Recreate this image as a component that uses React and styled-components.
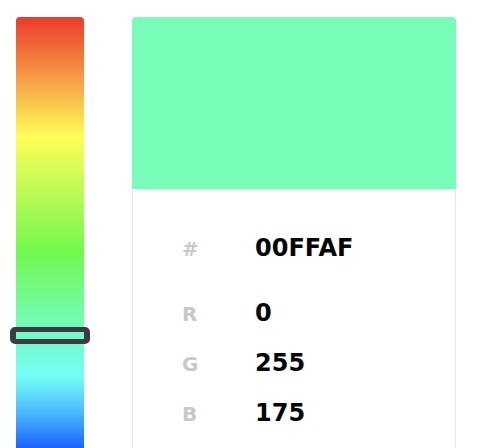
import React from "react";
import styled, { createGlobalStyle } from "styled-components";

const Global = createGlobalStyle`
  html, body { margin: 0; padding: 0; background: #ffffff; overflow: hidden; }
  body { font-family: "DejaVu Sans", "Liberation Sans", sans-serif; }
`;

const Page = styled.div`
  display: flex;
  align-items: flex-start;
  gap: 48px;
  padding: 17px 0 0 16px;
  height: 448px;
  box-sizing: border-box;
  overflow: hidden;
`;

const Slider = styled.div`
  position: relative;
  flex: 0 0 68px;
  height: 720px;
  border-radius: 4px;
  background: linear-gradient(
    to bottom,
    #ec3a2a 0px,
    #f59a47 60px,
    #fefe57 120px,
    #b9fa55 178px,
    #72f84e 235px,
    #74fbae 300px,
    #74fef6 360px,
    #4ab8fb 396px,
    #1c62ff 431px,
    #1a40ff 480px
  );
`;

const Handle = styled.div`
  position: absolute;
  left: -6px;
  top: ${(p) => p.$top}px;
  width: 80px;
  height: 17px;
  box-sizing: border-box;
  border-style: solid;
  border-color: #3d3a46;
  border-width: 5px 6px;
  border-radius: 5px;
  background: transparent;
`;

const Card = styled.div`
  flex: 0 0 324px;
  display: flex;
  flex-direction: column;
  border-radius: 4px 4px 0 0;
  overflow: hidden;
  height: 460px;
`;

const Swatch = styled.div`
  height: 172px;
  background: ${(p) => p.$color};
`;

const Body = styled.div`
  flex: 1;
  background: #ffffff;
  border: 1px solid #e6e6e6;
  border-top: none;
  padding: 34px 0 0 49px;
  display: flex;
  flex-direction: column;
`;

const Row = styled.div`
  display: flex;
  align-items: baseline;
  height: 50px;
  line-height: 50px;
  margin-bottom: ${(p) => (p.$gap ? 15 : 0)}px;
`;

const Label = styled.span`
  width: 72px;
  font-size: 20px;
  font-weight: 700;
  color: #c8c8c8;
`;

const Value = styled.span`
  font-size: 24px;
  font-weight: 700;
  color: #050505;
  margin-left: 1px;
`;

const rows = [
  { label: "R", value: "0" },
  { label: "G", value: "255" },
  { label: "B", value: "175" },
];

export default function App() {
  return (
    <>
      <Global />
      <Page>
        <Slider>
          <Handle $top={310} />
        </Slider>
        <Card>
          <Swatch $color="#78fdb8" />
          <Body>
            <Row $gap>
              <Label>#</Label>
              <Value>00FFAF</Value>
            </Row>
            {rows.map((r) => (
              <Row key={r.label}>
                <Label>{r.label}</Label>
                <Value>{r.value}</Value>
              </Row>
            ))}
          </Body>
        </Card>
      </Page>
    </>
  );
}
